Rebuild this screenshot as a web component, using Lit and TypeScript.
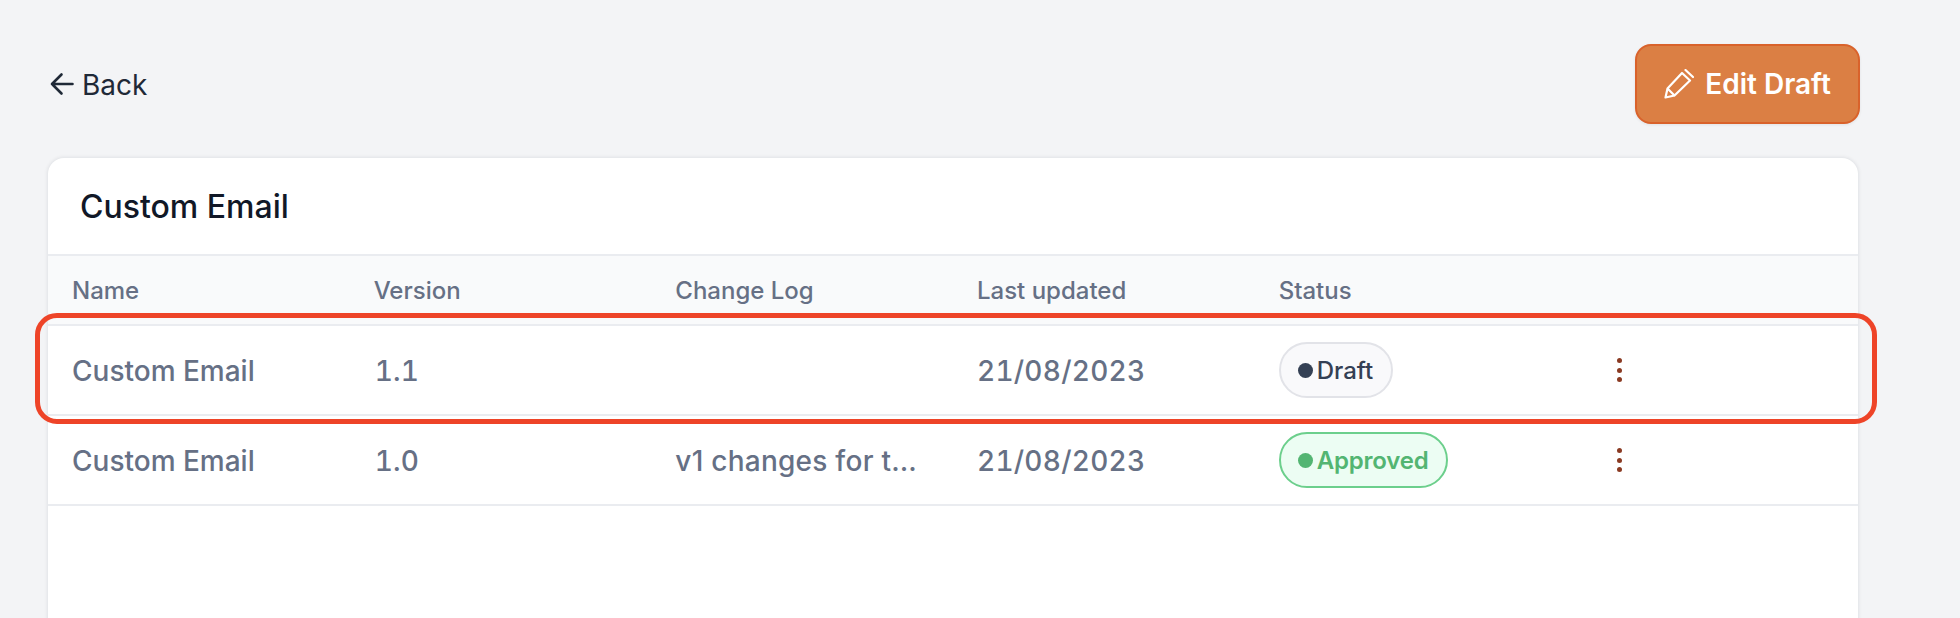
import { LitElement, html, css } from 'lit';
import { customElement } from 'lit/decorators.js';

const rows = [
  { name: 'Custom Email', version: '1.1', log: '', updated: '21/08/2023', status: 'Draft' },
  { name: 'Custom Email', version: '1.0', log: 'v1 changes for the first release', updated: '21/08/2023', status: 'Approved' },
];

@customElement('app-root')
export class AppRoot extends LitElement {
  static styles = css`
    :host {
      display: block;
      height: 618px;
      overflow: hidden;
      position: relative;
      background: #f3f4f6;
      font-family: Inter, 'Liberation Sans', sans-serif;
    }
    .page {
      padding: 44px 102px 0 48px;
    }
    .top {
      display: flex;
      justify-content: space-between;
      align-items: center;
      margin-bottom: 34px;
    }
    .back {
      display: flex;
      align-items: center;
      gap: 8px;
      padding-left: 2px;
      font-size: 28px;
      color: #1f2937;
    }
    .back svg {
      display: block;
    }
    .back span {
      padding-top: 2px;
    }
    .edit {
      display: flex;
      align-items: center;
      justify-content: center;
      gap: 11px;
      box-sizing: border-box;
      width: 225px;
      height: 80px;
      margin-right: -2px;
      background: #db7f44;
      border: 2px solid #d9622b;
      border-radius: 16px;
      box-shadow: 0 1px 3px rgba(16, 24, 40, 0.08);
      color: #fff;
      font: 600 28px Inter, sans-serif;
    }
    .card {
      background: #fff;
      border-radius: 16px 16px 0 0;
      box-shadow: 0 0 4px rgba(16, 24, 40, 0.12);
      height: 500px;
    }
    .title {
      height: 98px;
      box-sizing: border-box;
      padding: 0 32px;
      display: flex;
      align-items: center;
      font-size: 32px;
      font-weight: 500;
      color: #111827;
      border-bottom: 2px solid #eaecf0;
    }
    .grid {
      display: grid;
      grid-template-columns: repeat(6, 1fr);
      align-items: center;
    }
    .head {
      height: 68px;
      background: #f9fafb;
      font-size: 24px;
      font-weight: 550;
      color: #667085;
    }
    .row {
      height: 90px;
      box-sizing: border-box;
      border-top: 2px solid #eaecf0;
      font-size: 28px;
      font-weight: 500;
      color: #667085;
    }
    .row:last-child {
      border-bottom: 2px solid #eaecf0;
      height: 92px;
    }
    .cell {
      padding: 0 24px;
      white-space: nowrap;
      overflow: hidden;
      text-overflow: ellipsis;
    }
    .text {
      padding-top: 2px;
    }
    .num {
      font-variant-numeric: tabular-nums;
      letter-spacing: 0.25px;
    }
    .ver {
      padding-left: 25px;
    }
    .log {
      letter-spacing: 0.25px;
    }
    .badge {
      display: inline-flex;
      align-items: center;
      gap: 4px;
      box-sizing: border-box;
      height: 56px;
      padding: 0 18px 0 17px;
      border-radius: 28px;
      border: 2px solid #e2e3e8;
      background: #f9f9fb;
      color: #344054;
      font-size: 24px;
      vertical-align: middle;
    }
    .badge i {
      width: 15px;
      height: 15px;
      border-radius: 50%;
      background: currentColor;
    }
    .badge.approved {
      border-color: #6ccf8c;
      background: #ecfdf3;
      color: #53b572;
      font-weight: 600;
      letter-spacing: -0.2px;
    }
    .kebab {
      display: flex;
      flex-direction: column;
      gap: 4.5px;
      width: 5px;
      margin-left: 37px;
    }
    .kebab span {
      width: 5px;
      height: 5px;
      border-radius: 50%;
      background: #8a3a22;
    }
    .mark {
      position: absolute;
      left: 35px;
      top: 313px;
      width: 1842px;
      height: 111px;
      box-sizing: border-box;
      border: 5px solid #ee4428;
      border-radius: 22px;
    }
  `;

  render() {
    return html`
      <div class="page">
        <div class="top">
          <div class="back">
            <svg width="24" height="24" viewBox="0 0 24 24" fill="none" stroke="#1f2937" stroke-width="2.6" stroke-linecap="round" stroke-linejoin="round">
              <path d="M22.5 12H2M11.5 2.5L2 12l9.5 9.5" />
            </svg>
            <span>Back</span>
          </div>
          <div class="edit">
            <svg width="30" height="30" viewBox="0 0 30 30" fill="none" stroke="#fff" stroke-width="2.2" stroke-linecap="round" stroke-linejoin="round">
              <path d="M18 4l8 7.5-15.5 15-9 2 2-9zM3.5 19.5l7 7M21.5 1L29 8" />
            </svg>
            Edit Draft
          </div>
        </div>
        <div class="card">
          <div class="title">Custom Email</div>
          <div class="grid head">
            <div class="cell">Name</div>
            <div class="cell">Version</div>
            <div class="cell">Change Log</div>
            <div class="cell">Last updated</div>
            <div class="cell">Status</div>
            <div></div>
          </div>
          ${rows.map(
            (r) => html`
              <div class="grid row">
                <div class="cell text">${r.name}</div>
                <div class="cell text num ver">${r.version}</div>
                <div class="cell text log">${r.log}</div>
                <div class="cell text num">${r.updated}</div>
                <div class="cell">
                  <span class="badge ${r.status.toLowerCase()}"><i></i>${r.status}</span>
                </div>
                <div class="cell">
                  <div class="kebab"><span></span><span></span><span></span></div>
                </div>
              </div>
            `,
          )}
        </div>
      </div>
      <div class="mark"></div>
    `;
  }
}
